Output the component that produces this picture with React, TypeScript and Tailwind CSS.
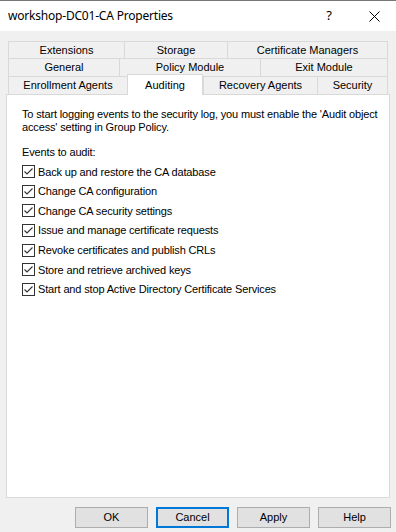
import type { ReactNode } from "react";

const UI = "font-['Liberation_Sans',Arial,sans-serif]";

const EVENTS = [
  "Back up and restore the CA database",
  "Change CA configuration",
  "Change CA security settings",
  "Issue and manage certificate requests",
  "Revoke certificates and publish CRLs",
  "Store and retrieve archived keys",
  "Start and stop Active Directory Certificate Services",
];

function Tab({ w, last, children }: { w: string; last?: boolean; children: ReactNode }) {
  return (
    <div
      className={`${w} flex items-center justify-center border-t border-l border-[#d9d9d9] bg-[#f0f0f0] ${
        last ? "border-r" : ""
      }`}
    >
      {children}
    </div>
  );
}

function CheckBox() {
  return (
    <span className="flex h-[13px] w-[13px] shrink-0 items-center justify-center border border-[#333] bg-white">
      <svg width="11" height="11" viewBox="0 0 11 11">
        <path d="M1.5 5.5 L4 8 L9.5 2.5" fill="none" stroke="#333" strokeWidth="1.1" />
      </svg>
    </span>
  );
}

function Button({ children, focused }: { children: ReactNode; focused?: boolean }) {
  return (
    <button
      type="button"
      className={`flex h-[21px] w-[73px] items-center justify-center bg-[#e1e1e1] text-[11px] text-black ${
        focused ? "border-2 border-[#0078d7]" : "border border-[#adadad]"
      }`}
    >
      {children}
    </button>
  );
}

export default function App() {
  return (
    <div className={`${UI} flex h-[532px] w-[396px] flex-col bg-[#f0f0f0] text-[11px] text-black`}>
      {/* title bar */}
      <div className="flex h-[31px] shrink-0 items-center border-t border-[#777] bg-white">
        <span className="ml-2 font-['Noto_Sans',sans-serif] text-[12px] tracking-[-0.2px]">
          workshop-DC01-CA Properties
        </span>
        <span className="ml-auto mr-[37px] font-['Noto_Sans',sans-serif] text-[13px]">?</span>
        <svg width="11" height="11" viewBox="0 0 11 11" className="mr-[16px]">
          <path d="M0.5 0.5 L10.5 10.5 M10.5 0.5 L0.5 10.5" stroke="#000" strokeWidth="1" />
        </svg>
      </div>

      {/* tabs */}
      <div className="ml-2 mt-[10px] flex w-[380px] flex-col">
        <div className="flex h-[17px]">
          <Tab w="w-[116px]">Extensions</Tab>
          <Tab w="w-[103px]">Storage</Tab>
          <Tab w="w-[161px]" last>
            Certificate Managers
          </Tab>
        </div>
        <div className="flex h-[18px]">
          <Tab w="w-[111px]">General</Tab>
          <Tab w="w-[141px]">Policy Module</Tab>
          <Tab w="w-[128px]" last>
            Exit Module
          </Tab>
        </div>
        <div className="flex h-[18px]">
          <Tab w="w-[119px]">Enrollment Agents</Tab>
          <div className="relative z-10 -mt-[2px] -mb-[1px] flex h-[21px] w-[76px] items-start justify-center border-x border-t border-[#d9d9d9] bg-white pt-[2px]">
            Auditing
          </div>
          <Tab w="w-[114px]">Recovery Agents</Tab>
          <Tab w="w-[71px]" last>
            Security
          </Tab>
        </div>
      </div>

      {/* page */}
      <div className="ml-[6px] h-[404px] w-[384px] border border-[#d9d9d9] bg-white pl-[15px] pt-[13px] tracking-[-0.15px]">
        <p className="w-[366px] leading-[13px]">
          To start logging events to the security log, you must enable the 'Audit object access' setting in
          Group Policy.
        </p>
        <p className="mt-[12px] leading-[13px]">Events to audit:</p>
        <div className="mt-[3px] flex flex-col">
          {EVENTS.map((e) => (
            <label key={e} className="flex h-[19.6px] items-center gap-[3px]">
              <CheckBox />
              <span>{e}</span>
            </label>
          ))}
        </div>
      </div>

      {/* buttons */}
      <div className="mt-[9px] flex gap-[8px] pl-[75px]">
        <Button>OK</Button>
        <Button focused>Cancel</Button>
        <Button>Apply</Button>
        <Button>Help</Button>
      </div>
    </div>
  );
}
